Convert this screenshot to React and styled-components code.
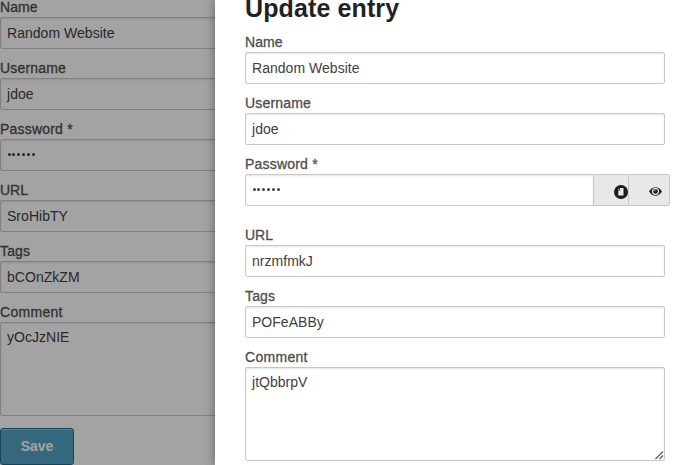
import React from "react";
import styled, { createGlobalStyle } from "styled-components";

const Global = createGlobalStyle`
  *, *::before, *::after { box-sizing: border-box; }
  html, body { margin: 0; height: 100%; overflow: hidden; background: #fff; }
  body { font-family: "Liberation Sans", Arial, sans-serif; color: #4d4d4d; }
`;
const Screen = styled.div`
  position: relative;
  width: 675px;
  height: 465px;
  overflow: hidden;
`;
const Page = styled.main`
  height: 465px;
  overflow: hidden;
`;
const PageForm = styled.form`
  margin-top: -4px;
  width: 420px;
`;
const Backdrop = styled.div`
  position: absolute;
  inset: 0;
  background: rgba(0, 0, 0, 0.36);
`;
const Panel = styled.aside`
  position: absolute;
  inset: 0 0 0 215px;
  padding-left: 30px;
  background: #fff;
  box-shadow: 0 0 10px rgba(0, 0, 0, 0.4);
`;
const Title = styled.h1`
  margin: -8px 0 0;
  height: 39px;
  line-height: 33px;
  font-size: 25px;
  font-weight: 700;
  letter-spacing: 0.12px;
  color: #222;
`;
const Field = styled.div`
  width: 420px;
  margin-bottom: ${(p) => p.$gap || 8}px;
`;
const Label = styled.label`
  display: block;
  height: 21px;
  line-height: 22px;
  font-size: 14px;
  letter-spacing: ${(p) => p.$track || 0}px;
  -webkit-text-stroke: 0.3px #4d4d4d;
  white-space: nowrap;
`;
const Box = styled.div`
  height: ${(p) => (p.$tall ? 94 : 32)}px;
  flex: 1;
  position: relative;
  padding: ${(p) => (p.$tall ? 5 : 6)}px 6px;
  border: 1px solid #c8c8c8;
  border-radius: 2px;
  background: #fff;
  box-shadow: inset 0 1px 2px rgba(0, 0, 0, 0.1);
  font-size: 14px;
  line-height: 18px;
  letter-spacing: ${(p) => p.$track || 0}px;
  color: #404040;
  white-space: nowrap;
`;
const Group = styled.div`
  display: flex;
  width: ${(p) => (p.$wide ? 425 : 420)}px;
`;
const Dots = styled.div`
  display: flex;
  gap: 1.9px;
  padding: 7px 0 0 0.6px;
`;
const Dot = styled.i`
  width: 3px;
  height: 3px;
  border-radius: 50%;
  background: #404040;
`;
const AddOn = styled.button`
  display: flex;
  align-items: center;
  justify-content: flex-end;
  width: ${(p) => p.$width}px;
  height: 32px;
  margin: 0 0 0 -1px;
  padding: 3px ${(p) => p.$end}px 0 0;
  border: 1px solid #c8c8c8;
  border-radius: ${(p) => (p.$last ? "0 2px 2px 0" : "0")};
  background: #e8e8e8;
  color: #222;
`;
const Grip = styled.svg`
  position: absolute;
  right: 0;
  bottom: 0;
`;
const Save = styled.button`
  display: block;
  width: 74px;
  height: 37px;
  margin-top: 12px;
  padding: 0 0 2px;
  border: 1px solid #286b85;
  border-radius: 3px;
  background: #53a3c3;
  box-shadow: inset 0 1px 0 rgba(255, 255, 255, 0.45);
  font: 700 14px "Liberation Sans", Arial, sans-serif;
  color: #fff;
`;

const LABEL_TRACKING = {
  Name: 0.1,
  Username: 0.17,
  "Password *": 0.2,
  Tags: 0.15,
  Comment: 0.3,
};

const PasswordDots = () => (
  <Dots>{[0, 1, 2, 3, 4, 5].map((n) => <Dot key={n} />)}</Dots>
);

const ClipboardIcon = () => (
  <svg width="14" height="14" viewBox="0 0 14 14">
    <circle cx="7" cy="7" r="7" fill="#1c1c1c" />
    <path d="M6 3H9.5V10.6H4.3V5.5H6Z" fill="#e8e8e8" />
    <path d="M4 4.8V3.7H5.2V4.8Z" fill="#e8e8e8" />
  </svg>
);

const EyeIcon = () => (
  <svg width="13" height="9" viewBox="0 0 13 9">
    <path d="M0 4.5C3 -1.3 10 -1.3 13 4.5C10 10.2 3 10.2 0 4.5Z" fill="#222" />
    <circle cx="6.5" cy="4.4" r="3" fill="none" stroke="#e8e8e8" strokeWidth="1.1" />
    <path d="M5.2 4.3Q5.4 3.1 6.7 2.9" fill="none" stroke="#e8e8e8" strokeWidth="0.8" />
  </svg>
);

function Entry({ label, text, tall, gap, grip }) {
  return (
    <Field $gap={gap}>
      <Label $track={LABEL_TRACKING[label]}>{label}</Label>
      <Box $tall={tall} $track={0.03}>
        {text}
        {grip && (
          <Grip width="10" height="10" viewBox="0 0 10 10">
            <path d="M1.5 9L9 1.5M5.5 9L9 5.5" stroke="#555" strokeWidth="1.1" />
          </Grip>
        )}
      </Box>
    </Field>
  );
}

function Fields({ url, tags, comment, actions }) {
  return (
    <>
      <Entry label="Name" text="Random Website" />
      <Entry label="Username" text="jdoe" />
      <Field $gap={actions ? 18 : 8}>
        <Label $track={LABEL_TRACKING["Password *"]}>Password *</Label>
        <Group $wide={actions}>
          <Box><PasswordDots /></Box>
          {actions && (
            <>
              <AddOn type="button" aria-label="Copy password" $width={36} $end={0}><ClipboardIcon /></AddOn>
              <AddOn type="button" aria-label="Show password" $width={42} $end={7} $last><EyeIcon /></AddOn>
            </>
          )}
        </Group>
      </Field>
      <Entry label="URL" text={url} />
      <Entry label="Tags" text={tags} />
      <Entry label="Comment" text={comment} tall gap={0} grip={actions} />
    </>
  );
}

export default function App() {
  return (
    <Screen>
      <Global />
      <Page>
        <PageForm>
          <Fields url="SroHibTY" tags="bCOnZkZM" comment="yOcJzNIE" />
          <Save type="button">Save</Save>
        </PageForm>
      </Page>
      <Backdrop />
      <Panel>
        <Title>Update entry</Title>
        <Fields url="nrzmfmkJ" tags="POFeABBy" comment="jtQbbrpV" actions />
      </Panel>
    </Screen>
  );
}
